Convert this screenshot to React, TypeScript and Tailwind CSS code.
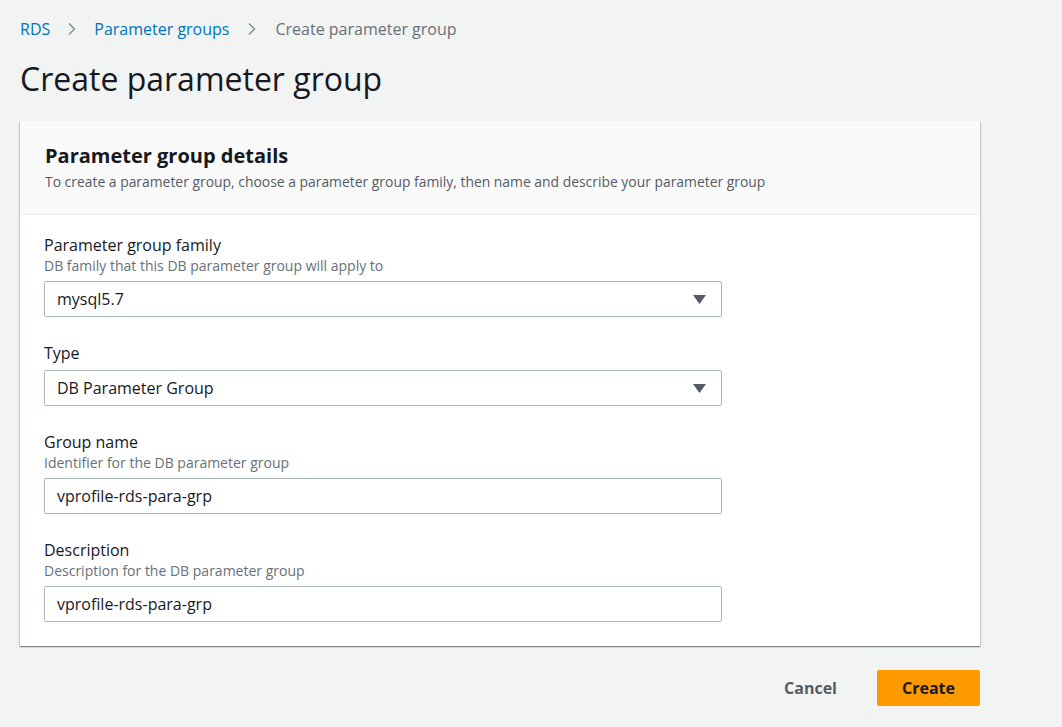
import { ChevronRight } from 'lucide-react';

function Caret() {
  return (
    <svg width="13" height="9" viewBox="0 0 13 9" className="text-[#545b64]">
      <path d="M0 0h13L6.5 9z" fill="currentColor" />
    </svg>
  );
}

function Field({
  label,
  hint,
  value,
  select,
}: {
  label: string;
  hint?: string;
  value: string;
  select?: boolean;
}) {
  return (
    <div className="flex flex-col">
      <div className="text-[16px] leading-[22px] text-[#16191f]">{label}</div>
      {hint && <div className="text-[14px] leading-[20px] text-[#687078]">{hint}</div>}
      <div
        className={
          (hint ? 'mt-[5px] ' : 'mt-[6px] ') +
          'flex h-[36px] w-[678px] items-center justify-between rounded-[2px] border border-[#aab7b8] bg-white pl-[12px] pr-[15px] text-[16px] text-[#16191f]'
        }
      >
        <span>{value}</span>
        {select && <Caret />}
      </div>
    </div>
  );
}

export default function App() {
  return (
    <div className="min-h-[727px] bg-[#f2f3f3] px-[20px] pt-[18px] font-['Open_Sans',sans-serif]">
      <nav className="flex items-center text-[16px] leading-[22px]">
        <span className="text-[#0073bb]">RDS</span>
        <ChevronRight className="mx-[12px] h-[20px] w-[20px] text-[#879596]" strokeWidth={2} />
        <span className="text-[#0073bb]">Parameter groups</span>
        <ChevronRight className="mx-[13px] h-[20px] w-[20px] text-[#879596]" strokeWidth={2} />
        <span className="text-[#687078]">Create parameter group</span>
      </nav>
      <h1 className="mt-[19px] text-[32px] leading-[40px] text-[#16191f]">Create parameter group</h1>

      <div className="mt-[22px] w-[960px] bg-white shadow-[0_1px_1px_0_rgba(0,28,36,0.3),1px_1px_1px_0_rgba(0,28,36,0.15),-1px_1px_1px_0_rgba(0,28,36,0.15)]">
        <div className="border-b border-[#eaeded] bg-[#fafafa] px-[25px] pb-[22px] pt-[22px]">
          <h2 className="text-[20px] font-bold leading-[26px] text-[#16191f]">Parameter group details</h2>
          <p className="mt-[3px] text-[13.9px] leading-[20px] text-[#545b64]">
            To create a parameter group, choose a parameter group family, then name and describe your parameter group
          </p>
        </div>
        <div className="flex flex-col gap-[25px] px-[24px] pb-[24px] pt-[19px]">
          <Field label="Parameter group family" hint="DB family that this DB parameter group will apply to" value="mysql5.7" select />
          <Field label="Type" value="DB Parameter Group" select />
          <Field label="Group name" hint="Identifier for the DB parameter group" value="vprofile-rds-para-grp" />
          <Field label="Description" hint="Description for the DB parameter group" value="vprofile-rds-para-grp" />
        </div>
      </div>

      <div className="mt-[24px] flex w-[960px] items-center justify-end gap-[20px]">
        <button className="px-[20px] py-[6px] text-[16px] font-bold text-[#545b64]">Cancel</button>
        <button className="h-[36px] w-[103px] rounded-[2px] bg-[#ff9900] text-[16px] font-bold text-[#16191f]">Create</button>
      </div>
    </div>
  );
}
